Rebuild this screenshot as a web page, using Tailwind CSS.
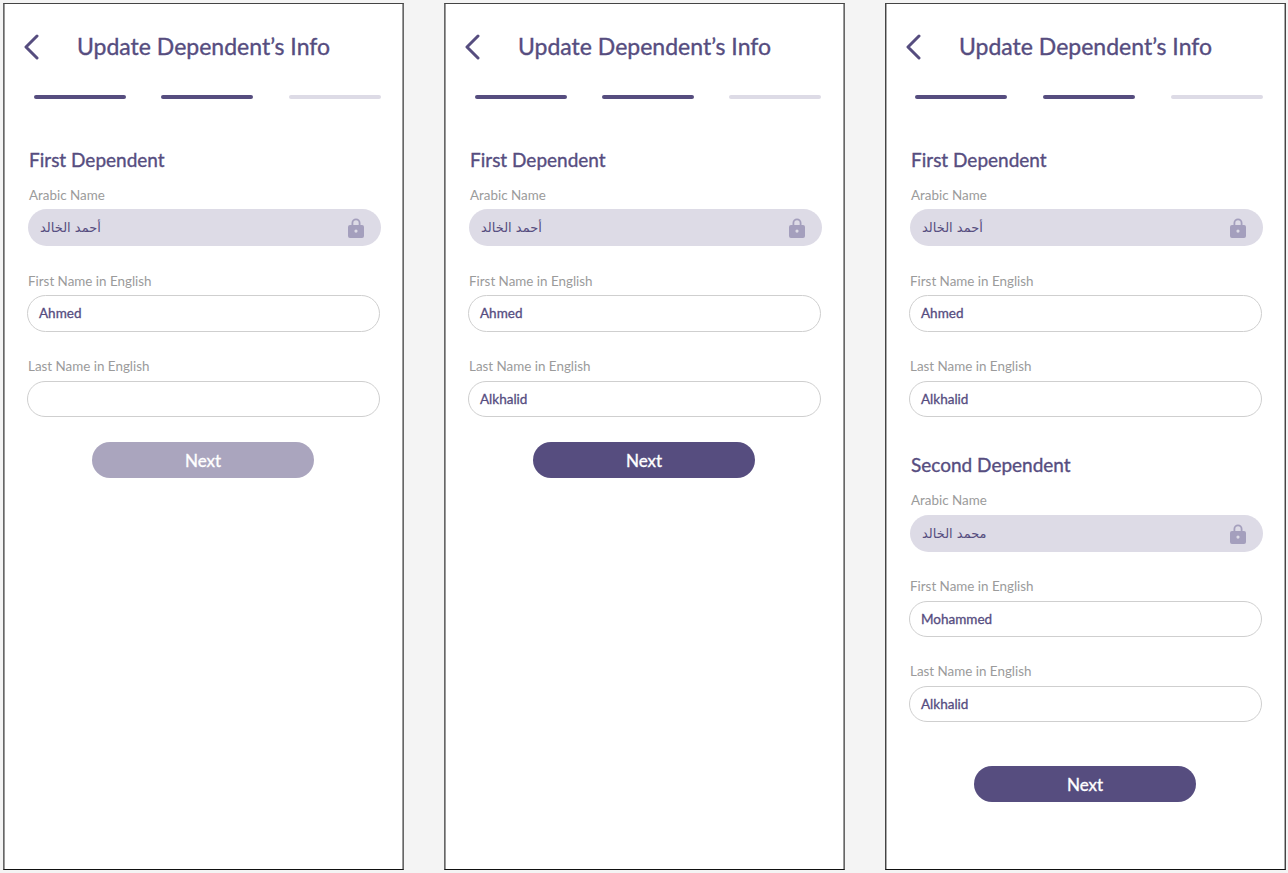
<!doctype html>
<html lang="en"><head><meta charset="utf-8"><title>Update Dependent's Info</title>
<script src="https://cdn.jsdelivr.net/npm/@tailwindcss/browser@4"></script></head>
<body class="bg-[#f4f4f4] font-['Lato','Noto_Sans',sans-serif] overflow-hidden">
<main class="flex gap-[40px] pl-[3px] pt-[3px] h-[873px] w-[1288px]">

<!-- Panel 1 -->
<section class="w-[401px] h-[867px] bg-white border border-[#111] border-x-[#666] border-t-[#444] shadow-[inset_1px_0_0_#999,inset_-1px_0_0_#999] flex flex-col shrink-0">
  <header class="h-[86px] flex items-center pl-[19px]">
    <svg class="w-[16px] h-[26px]" viewBox="0 0 16 26" fill="none" stroke="#564d7f" stroke-width="3" stroke-linecap="round" stroke-linejoin="round"><path d="M14 2 3 13l11 11"/></svg>
    <h1 class="ml-[38px] pb-[2px] text-[23px] leading-[30px] font-normal [-webkit-text-stroke:0.35px_#564d7f] text-[#564d7f]">Update Dependent’s Info</h1>
  </header>
  <div class="mt-[5px] ml-[30px] flex gap-[35px]">
    <div class="w-[92px] h-[4px] rounded-full bg-[#564d7f]"></div><div class="w-[92px] h-[4px] rounded-full bg-[#564d7f]"></div><div class="ml-[1px] w-[92px] h-[4px] rounded-full bg-[#dddbe6]"></div>
  </div>
  <h2 class="mt-[49px] ml-[25px] text-[19px] leading-[23px] font-normal [-webkit-text-stroke:0.35px_#564d7f] text-[#564d7f]">First Dependent</h2>
  <label class="mt-[15px] ml-[25px] text-[13.4px] leading-[18px] text-[#9b9b9b]">Arabic Name</label>
  <div class="mt-[5px] ml-[24px] w-[353px] h-[37px] rounded-full bg-[#dddbe6] flex items-center justify-between pl-[12px] pr-[17px]">
    <span class="text-[13px] text-[#564d7f] font-['DejaVu_Sans',sans-serif]">أحمد الخالد</span>
    <svg class="w-[16px] h-[20px]" viewBox="0 0 16 20"><path fill="#a49fbd" fill-rule="evenodd" d="M3.5 7V5a4.500 4.500 0 0 1 9 0v2H14a2 2 0 0 1 2 2v9a2 2 0 0 1-2 2H2a2 2 0 0 1-2-2V9a2 2 0 0 1 2-2h1.500ZM5.300 7h5.400V5a2.700 2.700 0 0 0-5.400 0v2ZM8 11.500a1.600 1.600 0 1 0 0 3.200 1.600 1.600 0 0 0 0-3.200Z"/></svg>
  </div>
  <label class="mt-[26px] ml-[24px] text-[13.4px] leading-[18px] text-[#9b9b9b]">First Name in English</label>
  <div class="mt-[5px] ml-[23px] w-[353px] h-[37px] rounded-full border border-[#cfcfcf] flex items-center pl-[11px] text-[13.5px] [-webkit-text-stroke:0.3px_#564d7f] text-[#564d7f]">Ahmed</div>
  <label class="mt-[25px] ml-[24px] text-[13.4px] leading-[18px] text-[#9b9b9b]">Last Name in English</label>
  <div class="mt-[6px] ml-[23px] w-[353px] h-[36px] rounded-full border border-[#cfcfcf]"></div>
  <button class="mt-[25px] ml-[88px] w-[222px] h-[36px] pt-[1px] rounded-full bg-[#aaa5be] text-white text-[17px] font-normal [-webkit-text-stroke:0.35px_#fff]">Next</button>
</section>

<!-- Panel 2 -->
<section class="w-[401px] h-[867px] bg-white border border-[#111] border-x-[#666] border-t-[#444] shadow-[inset_1px_0_0_#999,inset_-1px_0_0_#999] flex flex-col shrink-0">
  <header class="h-[86px] flex items-center pl-[19px]">
    <svg class="w-[16px] h-[26px]" viewBox="0 0 16 26" fill="none" stroke="#564d7f" stroke-width="3" stroke-linecap="round" stroke-linejoin="round"><path d="M14 2 3 13l11 11"/></svg>
    <h1 class="ml-[38px] pb-[2px] text-[23px] leading-[30px] font-normal [-webkit-text-stroke:0.35px_#564d7f] text-[#564d7f]">Update Dependent’s Info</h1>
  </header>
  <div class="mt-[5px] ml-[30px] flex gap-[35px]">
    <div class="w-[92px] h-[4px] rounded-full bg-[#564d7f]"></div><div class="w-[92px] h-[4px] rounded-full bg-[#564d7f]"></div><div class="w-[92px] h-[4px] rounded-full bg-[#dddbe6]"></div>
  </div>
  <h2 class="mt-[49px] ml-[25px] text-[19px] leading-[23px] font-normal [-webkit-text-stroke:0.35px_#564d7f] text-[#564d7f]">First Dependent</h2>
  <label class="mt-[15px] ml-[25px] text-[13.4px] leading-[18px] text-[#9b9b9b]">Arabic Name</label>
  <div class="mt-[5px] ml-[24px] w-[353px] h-[37px] rounded-full bg-[#dddbe6] flex items-center justify-between pl-[12px] pr-[17px]">
    <span class="text-[13px] text-[#564d7f] font-['DejaVu_Sans',sans-serif]">أحمد الخالد</span>
    <svg class="w-[16px] h-[20px]" viewBox="0 0 16 20"><path fill="#a49fbd" fill-rule="evenodd" d="M3.5 7V5a4.500 4.500 0 0 1 9 0v2H14a2 2 0 0 1 2 2v9a2 2 0 0 1-2 2H2a2 2 0 0 1-2-2V9a2 2 0 0 1 2-2h1.500ZM5.300 7h5.400V5a2.700 2.700 0 0 0-5.400 0v2ZM8 11.500a1.600 1.600 0 1 0 0 3.200 1.600 1.600 0 0 0 0-3.200Z"/></svg>
  </div>
  <label class="mt-[26px] ml-[24px] text-[13.4px] leading-[18px] text-[#9b9b9b]">First Name in English</label>
  <div class="mt-[5px] ml-[23px] w-[353px] h-[37px] rounded-full border border-[#cfcfcf] flex items-center pl-[11px] text-[13.5px] [-webkit-text-stroke:0.3px_#564d7f] text-[#564d7f]">Ahmed</div>
  <label class="mt-[25px] ml-[24px] text-[13.4px] leading-[18px] text-[#9b9b9b]">Last Name in English</label>
  <div class="mt-[6px] ml-[23px] w-[353px] h-[36px] rounded-full border border-[#cfcfcf] flex items-center pl-[11px] pt-[1px] text-[13.5px] [-webkit-text-stroke:0.3px_#564d7f] text-[#564d7f]">Alkhalid</div>
  <button class="mt-[25px] ml-[88px] w-[222px] h-[36px] pt-[1px] rounded-full bg-[#564d7f] text-white text-[17px] font-normal [-webkit-text-stroke:0.35px_#fff]">Next</button>
</section>

<!-- Panel 3 -->
<section class="w-[401px] h-[867px] bg-white border border-[#111] border-x-[#444] border-t-[#444] shadow-[inset_1px_0_0_#aaa,inset_-1px_0_0_#aaa] flex flex-col shrink-0">
  <header class="h-[86px] flex items-center pl-[19px]">
    <svg class="w-[16px] h-[26px]" viewBox="0 0 16 26" fill="none" stroke="#564d7f" stroke-width="3" stroke-linecap="round" stroke-linejoin="round"><path d="M14 2 3 13l11 11"/></svg>
    <h1 class="ml-[38px] pb-[2px] text-[23px] leading-[30px] font-normal [-webkit-text-stroke:0.35px_#564d7f] text-[#564d7f]">Update Dependent’s Info</h1>
  </header>
  <div class="mt-[5px] ml-[29px] flex gap-[36px]">
    <div class="w-[92px] h-[4px] rounded-full bg-[#564d7f]"></div><div class="w-[92px] h-[4px] rounded-full bg-[#564d7f]"></div><div class="w-[92px] h-[4px] rounded-full bg-[#dddbe6]"></div>
  </div>
  <h2 class="mt-[49px] ml-[25px] text-[19px] leading-[23px] font-normal [-webkit-text-stroke:0.35px_#564d7f] text-[#564d7f]">First Dependent</h2>
  <label class="mt-[15px] ml-[25px] text-[13.4px] leading-[18px] text-[#9b9b9b]">Arabic Name</label>
  <div class="mt-[5px] ml-[24px] w-[353px] h-[37px] rounded-full bg-[#dddbe6] flex items-center justify-between pl-[12px] pr-[17px]">
    <span class="text-[13px] text-[#564d7f] font-['DejaVu_Sans',sans-serif]">أحمد الخالد</span>
    <svg class="w-[16px] h-[20px]" viewBox="0 0 16 20"><path fill="#a49fbd" fill-rule="evenodd" d="M3.5 7V5a4.500 4.500 0 0 1 9 0v2H14a2 2 0 0 1 2 2v9a2 2 0 0 1-2 2H2a2 2 0 0 1-2-2V9a2 2 0 0 1 2-2h1.500ZM5.300 7h5.400V5a2.700 2.700 0 0 0-5.400 0v2ZM8 11.500a1.600 1.600 0 1 0 0 3.200 1.600 1.600 0 0 0 0-3.200Z"/></svg>
  </div>
  <label class="mt-[26px] ml-[24px] text-[13.4px] leading-[18px] text-[#9b9b9b]">First Name in English</label>
  <div class="mt-[5px] ml-[23px] w-[353px] h-[37px] rounded-full border border-[#cfcfcf] flex items-center pl-[11px] text-[13.5px] [-webkit-text-stroke:0.3px_#564d7f] text-[#564d7f]">Ahmed</div>
  <label class="mt-[25px] ml-[24px] text-[13.4px] leading-[18px] text-[#9b9b9b]">Last Name in English</label>
  <div class="mt-[6px] ml-[23px] w-[353px] h-[36px] rounded-full border border-[#cfcfcf] flex items-center pl-[11px] pt-[1px] text-[13.5px] [-webkit-text-stroke:0.3px_#564d7f] text-[#564d7f]">Alkhalid</div>

  <h2 class="mt-[36px] ml-[25px] text-[19px] leading-[23px] font-normal [-webkit-text-stroke:0.35px_#564d7f] text-[#564d7f]">Second Dependent</h2>
  <label class="mt-[15px] ml-[25px] text-[13.4px] leading-[18px] text-[#9b9b9b]">Arabic Name</label>
  <div class="mt-[6px] ml-[24px] w-[353px] h-[37px] rounded-full bg-[#dddbe6] flex items-center justify-between pl-[12px] pr-[17px]">
    <span class="text-[13px] text-[#564d7f] font-['DejaVu_Sans',sans-serif]">محمد الخالد</span>
    <svg class="w-[16px] h-[20px]" viewBox="0 0 16 20"><path fill="#a49fbd" fill-rule="evenodd" d="M3.5 7V5a4.500 4.500 0 0 1 9 0v2H14a2 2 0 0 1 2 2v9a2 2 0 0 1-2 2H2a2 2 0 0 1-2-2V9a2 2 0 0 1 2-2h1.500ZM5.300 7h5.400V5a2.700 2.700 0 0 0-5.400 0v2ZM8 11.500a1.600 1.600 0 1 0 0 3.200 1.600 1.600 0 0 0 0-3.200Z"/></svg>
  </div>
  <label class="mt-[25px] ml-[24px] text-[13.4px] leading-[18px] text-[#9b9b9b]">First Name in English</label>
  <div class="mt-[6px] ml-[23px] w-[353px] h-[36px] rounded-full border border-[#cfcfcf] flex items-center pl-[11px] text-[13.5px] [-webkit-text-stroke:0.3px_#564d7f] text-[#564d7f]">Mohammed</div>
  <label class="mt-[25px] ml-[24px] text-[13.4px] leading-[18px] text-[#9b9b9b]">Last Name in English</label>
  <div class="mt-[6px] ml-[23px] w-[353px] h-[36px] rounded-full border border-[#cfcfcf] flex items-center pl-[11px] pt-[1px] text-[13.5px] [-webkit-text-stroke:0.3px_#564d7f] text-[#564d7f]">Alkhalid</div>
  <button class="mt-[44px] ml-[88px] w-[222px] h-[36px] pt-[1px] rounded-full bg-[#564d7f] text-white text-[17px] font-normal [-webkit-text-stroke:0.35px_#fff]">Next</button>
</section>
</main>
</body></html>
